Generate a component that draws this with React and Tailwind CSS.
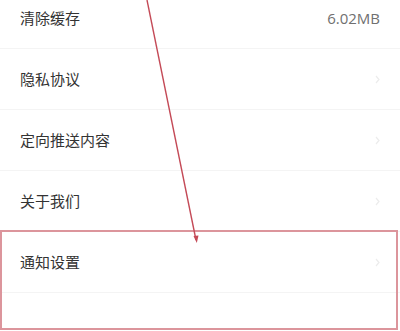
import React from "react";

const rows = [
  { label: "清除缓存", value: "6.02MB" },
  { label: "隐私协议" },
  { label: "定向推送内容" },
  { label: "关于我们" },
  { label: "通知设置" },
  { label: "" },
];

function Chevron() {
  return (
    <svg width="5" height="9" viewBox="0 0 5 9" fill="none" stroke="#ececec" strokeWidth="1.2">
      <path d="M1 1l3 3.5-3 3.5" />
    </svg>
  );
}

export default function App() {
  return (
    <div
      className="relative w-[400px] h-[331px] overflow-hidden bg-white"
      style={{ fontFamily: '"Noto Sans CJK SC", "Noto Sans", sans-serif' }}
    >
      <div className="flex flex-col -mt-[12px]">
        {rows.map((r, i) => (
          <div
            key={i}
            className="flex items-center justify-between h-[61px] pl-[20px] pr-[20px] border-b border-[#f4f4f4]"
          >
            <span className="text-[15px] text-[#333333]">{r.label}</span>
            {r.value ? (
              <span className="text-[15px] text-[#707070]" style={{ fontFamily: '"Open Sans", sans-serif' }}>
                {r.value}
              </span>
            ) : r.label ? (
              <Chevron />
            ) : null}
          </div>
        ))}
      </div>
      <div className="absolute left-0 top-[230px] w-[398px] h-[100px] border-2 border-[#dc959c]" />
      <svg className="absolute left-0 top-0" width="400" height="331">
        <line x1="147" y1="0" x2="196" y2="240" stroke="#c44a57" strokeWidth="1.4" />
        <path d="M193.5 236 L196.8 243 L198.5 235.5 Z" fill="#c44a57" />
      </svg>
    </div>
  );
}
